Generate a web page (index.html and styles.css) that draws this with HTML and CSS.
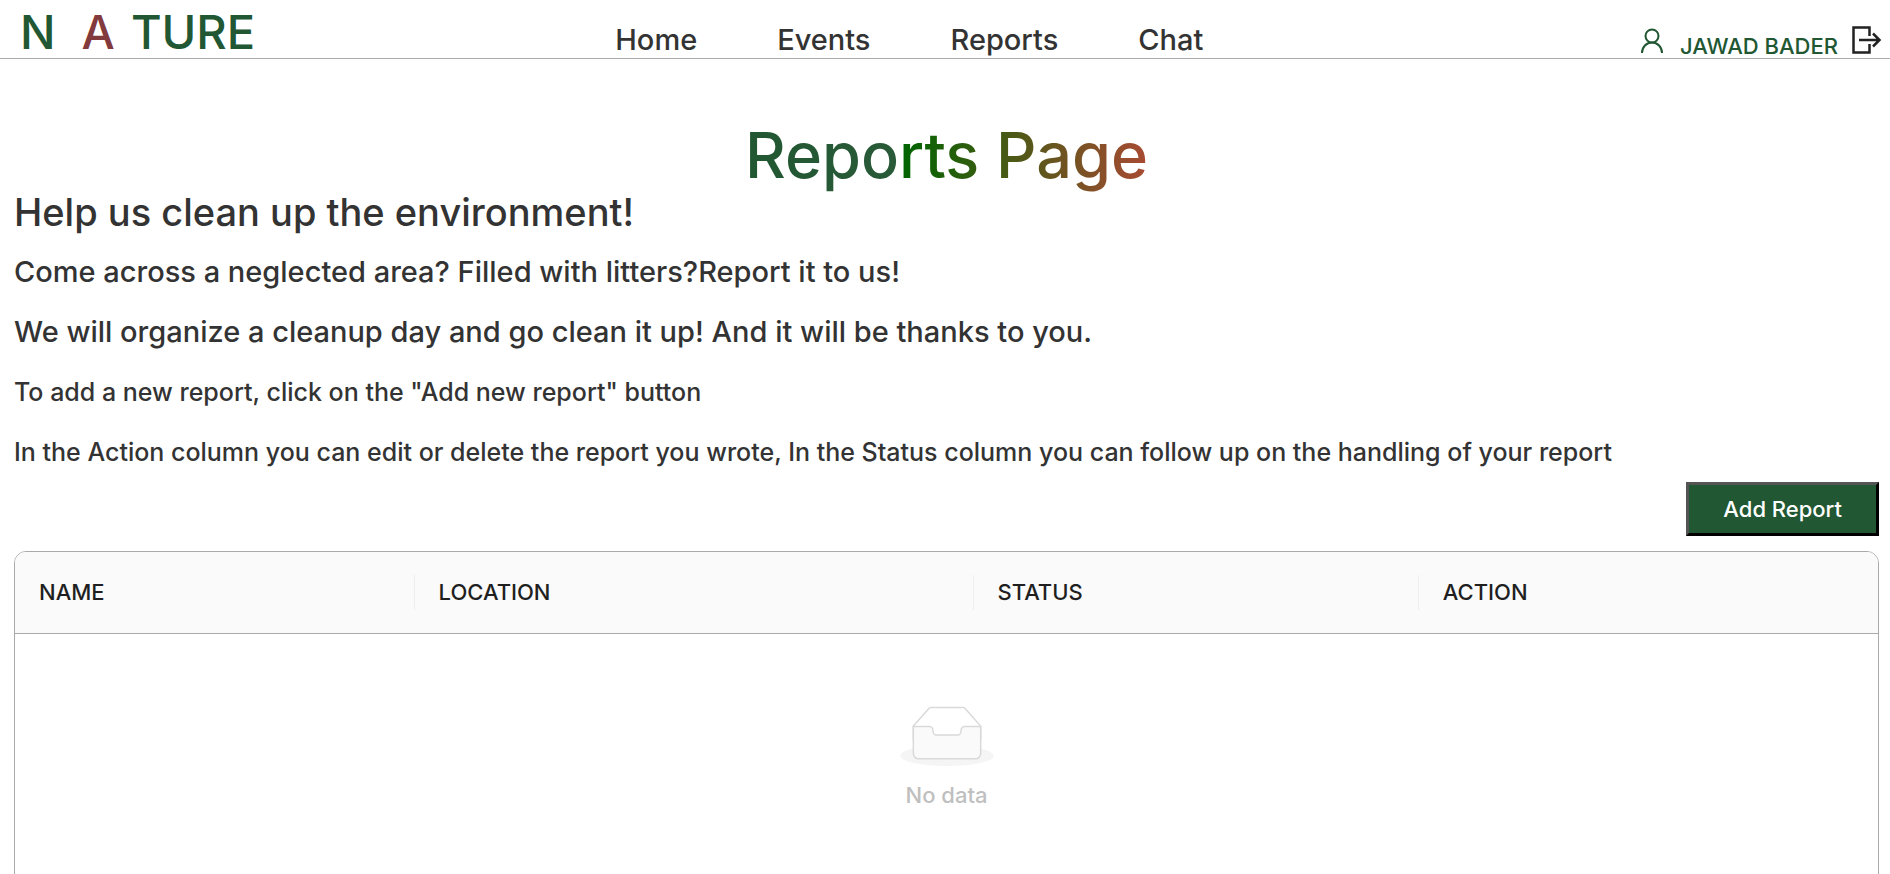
FILE: index.html
```html
<!DOCTYPE html>
<html lang="en">
<head>
<meta charset="utf-8">
<meta name="viewport" content="width=device-width, initial-scale=1">
<title>Nature - Reports</title>
<link rel="stylesheet" href="styles.css">
</head>
<body>
<header class="topbar">
  <a class="logo" href="#"><span>N</span><span class="logo-accent">A</span><span>TURE</span></a>
  <nav class="nav">
    <a href="#">Home</a>
    <a href="#">Events</a>
    <a href="#">Reports</a>
    <a href="#">Chat</a>
  </nav>
  <div class="account">
    <svg class="user-icon" viewBox="0 0 24 26" fill="none" stroke="currentColor" stroke-width="2" aria-hidden="true"><circle cx="12" cy="8" r="6.5"/><path d="M2 25c0-6 4.500-10.500 10-10.500S22 19 22 25"/></svg>
    <a class="user-name" href="#">JAWAD BADER</a>
    <button class="logout" type="button" aria-label="Log out"><svg viewBox="0 0 30 28" fill="none" stroke="currentColor" stroke-width="2.500" aria-hidden="true"><path d="M17.500 10V1.500H1.500v25h16V18M7 14h20M21 7.500l6.500 6.500-6.500 6.500"/></svg></button>
  </div>
</header>
<main class="page">
  <h1 class="title"><span>Reports Page</span></h1>
  <section class="intro">
    <h2>Help us clean up the environment!</h2>
    <p class="lead">Come across a neglected area? Filled with litters?Report it to us!</p>
    <p class="lead">We will organize a cleanup day and go clean it up! And it will be thanks to you.</p>
    <p class="note">To add a new report, click on the "Add new report" button</p>
    <p class="note">In the Action column you can edit or delete the report you wrote, In the Status column you can follow up on the handling of your report</p>
  </section>
  <div class="actions"><button class="add" type="button">Add Report</button></div>
  <div class="table-box">
    <table class="reports">
      <colgroup><col class="col-name"><col class="col-location"><col class="col-status"><col></colgroup>
      <thead><tr>
        <th scope="col"><div class="head">NAME</div></th>
        <th scope="col"><div class="head">LOCATION</div></th>
        <th scope="col"><div class="head">STATUS</div></th>
        <th scope="col"><div class="head">ACTION</div></th>
      </tr></thead>
      <tbody><tr><td colspan="4">
        <div class="empty">
          <svg viewBox="0 0 64 41" aria-hidden="true"><g transform="translate(0 1)" fill="none" fill-rule="evenodd"><ellipse fill="#f5f5f5" cx="32" cy="33" rx="32" ry="7"/><g fill-rule="nonzero" stroke="#d9d9d9"><path d="M55 12.760L44.854 1.258C44.367.474 43.656 0 42.907 0H21.093c-.749 0-1.460.474-1.947 1.257L9 12.761V22h46v-9.240z"/><path d="M41.613 15.931c0-1.605.994-2.930 2.227-2.931H55v18.137C55 33.260 53.680 35 52.050 35h-40.100C10.320 35 9 33.259 9 31.137V13h11.160c1.233 0 2.227 1.323 2.227 2.928v.022c0 1.605 1.005 2.901 2.237 2.901h14.752c1.232 0 2.237-1.308 2.237-2.913v-.007z" fill="#fafafa"/></g></g></svg>
          <span>No data</span>
        </div>
      </td></tr></tbody>
    </table>
  </div>
</main>
</body>
</html>
```
FILE: styles.css
```css
* { box-sizing: border-box; }
body {
  margin: 0;
  height: 100vh;
  overflow: hidden;
  background: #fff;
  color: #333;
  font-family: Inter, "Liberation Sans", sans-serif;
}
a { color: inherit; text-decoration: none; }
button { font-family: inherit; cursor: pointer; }

.topbar {
  display: grid;
  grid-template-columns: 1fr auto 1.14fr;
  height: 59px;
  padding: 0 8px 0 20px;
  border-bottom: 1px solid #aaa;
}
.logo {
  display: flex;
  align-items: center;
  padding-top: 6px;
  color: #215732;
  font-size: 47px;
  font-weight: 500;
  line-height: 52px;
}
.logo-accent { margin: 0 16px 0 26px; color: #833a3c; }
.nav {
  display: flex;
  align-items: flex-end;
  gap: 80px;
  padding-bottom: 1px;
  font-size: 29px;
  font-weight: 500;
  line-height: 34px;
}
.account {
  display: flex;
  justify-content: flex-end;
  align-items: flex-end;
  padding-bottom: 4px;
  color: #215732;
}
.user-icon { width: 24px; height: 26px; margin-right: 16px; }
.user-name { margin-right: 14px; font-size: 22px; font-weight: 500; line-height: 16px; }
.logout { display: flex; padding: 0; border: 0; background: none; color: #222; }
.logout svg { width: 30px; height: 28px; }

.page { padding: 58px 11px 0 14px; }
.title {
  margin: 0;
  text-align: center;
  font-size: 63px;
  font-weight: 500;
  line-height: 76px;
}
.title span {
  background: linear-gradient(to right, #215732 0%, #2a5a38 39%, #006400 39%, #a84b32 100%);
  -webkit-background-clip: text;
  background-clip: text;
  color: transparent;
}
.intro { font-weight: 500; }
.intro h2 { margin: 0 0 11px; font-size: 38px; font-weight: 500; line-height: 38px; }
.intro p { margin: 0; line-height: 60px; }
.intro .lead { font-size: 29px; }
.intro .note { font-size: 25px; }

.actions { display: flex; justify-content: flex-end; margin-bottom: 15px; }
.add {
  padding: 12px 34px;
  border: 3px outset #000;
  background: #215732;
  color: #fff;
  font-size: 22px;
  font-weight: 500;
  line-height: 24px;
}

.table-box { overflow: hidden; border: 1px solid #aaa; border-radius: 12px 12px 0 0; }
.reports { width: 100%; border-collapse: collapse; table-layout: fixed; }
.col-name { width: 21.45%; }
.col-location { width: 30%; }
.col-status { width: 23.9%; }
.reports th {
  padding: 23px 0;
  border-bottom: 1px solid #aaa;
  background: #fafafa;
  color: #1f1f1f;
  font-size: 22px;
  font-weight: 500;
  text-align: left;
}
.head { padding-left: 24px; line-height: 35px; border-right: 1px solid #eee; }
th:last-child .head { border-right: 0; }
.reports td { padding: 72px 0; }
.empty {
  display: flex;
  flex-direction: column;
  align-items: center;
  gap: 12px;
  color: #bfbfbf;
  font-size: 22px;
  font-weight: 500;
  line-height: 34px;
}
.empty svg { width: 94px; height: 60px; }
```
